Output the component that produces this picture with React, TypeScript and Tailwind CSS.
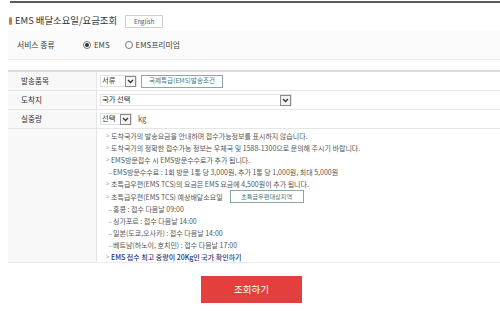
const FONT = { fontFamily: '"Noto Sans CJK KR", "Noto Sans", sans-serif' };

const Chevron = () => (
    <svg width="7" height="5" viewBox="0 0 7 5" fill="none">
        <path d="M1 1 L3.5 3.5 L6 1" stroke="#333" strokeWidth="1.3" />
    </svg>
);

// 셀렉트 박스 흉내
const FakeSelect = ({ label, width }: { label: string; width: string }) => (
    <div className={`flex items-center justify-between h-[12px] border border-[#e2e2e2] bg-white ${width}`}>
        <span className="pl-[1px] text-[7.3px] text-[#333] leading-none">{label}</span>
        <span className="w-[11px] h-[11px] flex items-center justify-center border border-[#8a8a8a] bg-[#f4f4f4]">
            <Chevron />
        </span>
    </div>
);

const Radio = ({ checked, label }: { checked?: boolean; label: string }) => (
    <div className="flex items-center gap-[3px]">
        <span className="w-[8px] h-[8px] rounded-full border border-[#777] bg-white flex items-center justify-center">
            {checked && <span className="w-[4px] h-[4px] rounded-full bg-[#333]"></span>}
        </span>
        <span className="text-[7.8px] text-[#444]">{label}</span>
    </div>
);

const Bullet = ({ children, strong }: { children: any; strong?: boolean }) => (
    <div className="flex items-center h-[12px] overflow-hidden">
        <span className="w-[5px] text-[6px] text-[#999]">&gt;</span>
        <span className={strong ? 'text-[#2a3580] font-medium' : 'text-[#555]'}>{children}</span>
    </div>
);

const Sub = ({ children }: { children: any }) => (
    <div className="flex items-center h-[12px] pl-[3px] text-[#555] overflow-hidden">- {children}</div>
);

export default function App() {
    return (
        <div className="w-[500px] h-[311px] bg-white overflow-hidden" style={FONT}>
            <div className="ml-[10px] h-[2px] bg-[#5a5a5a] mt-[1px]"></div>

            {/* 타이틀 */}
            <div className="flex items-center mt-[11px] h-[14px] pl-[9px]">
                <span className="w-[3px] h-[8px] rounded-[2px] bg-[#e8771e]"></span>
                <h1 className="ml-[3px] text-[9.4px] text-[#333] leading-none">EMS 배달소요일/요금조회</h1>
                <span className="ml-[8px] w-[38px] h-[13px] border border-[#cfcfcf] flex items-center justify-center text-[6px] text-[#555]">English</span>
            </div>

            {/* 서비스 종류 */}
            <div className="ml-[8px] mt-[2px] h-[30px] bg-[#fafafa] border-b border-[#ececec] flex items-center">
                <span className="ml-[9px] w-[66px] text-[7.8px] text-[#333]">서비스 종류</span>
                <Radio checked label="EMS" />
                <div className="ml-[15px]"><Radio label="EMS프리미엄" /></div>
            </div>

            {/* 조회 테이블 */}
            <div className="ml-[8px] mt-[10px] border-t-2 border-[#dcdcdc] text-[7.6px]">
                <div className="flex h-[19px] border-b border-[#e6e6e6]">
                    <div className="w-[89px] bg-[#f8f8f8] border-r border-[#e6e6e6] flex items-center pl-[13px] text-[#333]">발송품목</div>
                    <div className="flex items-center pl-[3px] gap-[4px]">
                        <FakeSelect label="서류" width="w-[37px]" />
                        <span className="h-[13px] w-[82px] border border-[#86a9a6] flex items-center justify-center text-[6.6px] text-[#3f7c76] bg-white">국제특급(EMS)발송조건</span>
                    </div>
                </div>
                <div className="flex h-[19px] border-b border-[#e6e6e6]">
                    <div className="w-[89px] bg-[#f8f8f8] border-r border-[#e6e6e6] flex items-center pl-[13px] text-[#333]">도착지</div>
                    <div className="flex items-center pl-[3px]">
                        <FakeSelect label="국가 선택" width="w-[192px]" />
                    </div>
                </div>
                <div className="flex h-[19px] border-b border-[#e6e6e6]">
                    <div className="w-[89px] bg-[#f8f8f8] border-r border-[#e6e6e6] flex items-center pl-[13px] text-[#333]">실중량</div>
                    <div className="flex items-center pl-[3px] gap-[6px]">
                        <FakeSelect label="선택" width="w-[32px]" />
                        <span className="text-[#555]">kg</span>
                    </div>
                </div>
                <div className="flex h-[134px] border-b border-[#ececec]">
                    <div className="w-[89px] bg-[#f8f8f8] border-r border-[#e6e6e6]"></div>
                    <div className="pl-[9px] pt-[1px] leading-[12px] text-[7px]">
                        <Bullet>도착국가의 발송요금을 안내하며 접수가능정보를 표시하지 않습니다.</Bullet>
                        <Bullet>도착국가의 정확한 접수가능 정보는 우체국 및 1588-1300으로 문의해 주시기 바랍니다.</Bullet>
                        <Bullet>EMS방문접수 시 EMS방문수수료가 추가 됩니다.</Bullet>
                        <Sub>EMS방문수수료 : 1회 방문 1통 당 3,000원, 추가 1통 당 1,000원, 최대 5,000원</Sub>
                        <Bullet>초특급우편(EMS TCS)의 요금은 EMS 요금에 4,500원이 추가 됩니다.</Bullet>
                        <div className="flex items-center h-[13px]">
                            <span className="w-[5px] text-[6px] text-[#999]">&gt;</span>
                            <span className="text-[#555]">초특급우편(EMS TCS) 예상배달소요일</span>
                            <span className="ml-[7px] h-[13px] w-[74px] border border-[#86a9a6] flex items-center justify-center text-[6.2px] text-[#3f7c76]">초특급우편대상지역</span>
                        </div>
                        <Sub>홍콩 : 접수 다음날 09:00</Sub>
                        <Sub>싱가포르 : 접수 다음날 14:00</Sub>
                        <Sub>일본(도쿄,오사카) : 접수 다음날 14:00</Sub>
                        <Sub>베트남(하노이, 호치민) : 접수 다음날 17:00</Sub>
                        <Bullet strong>EMS 접수 최고 중량이 20Kg인 국가 확인하기</Bullet>
                    </div>
                </div>
            </div>

            {/* 조회 버튼 */}
            <div className="flex justify-center mt-[13px] pl-[3px]">
                <button className="w-[101px] h-[27px] bg-[#e23f3d] text-white text-[9.5px]">조회하기</button>
            </div>
        </div>
    );
}
